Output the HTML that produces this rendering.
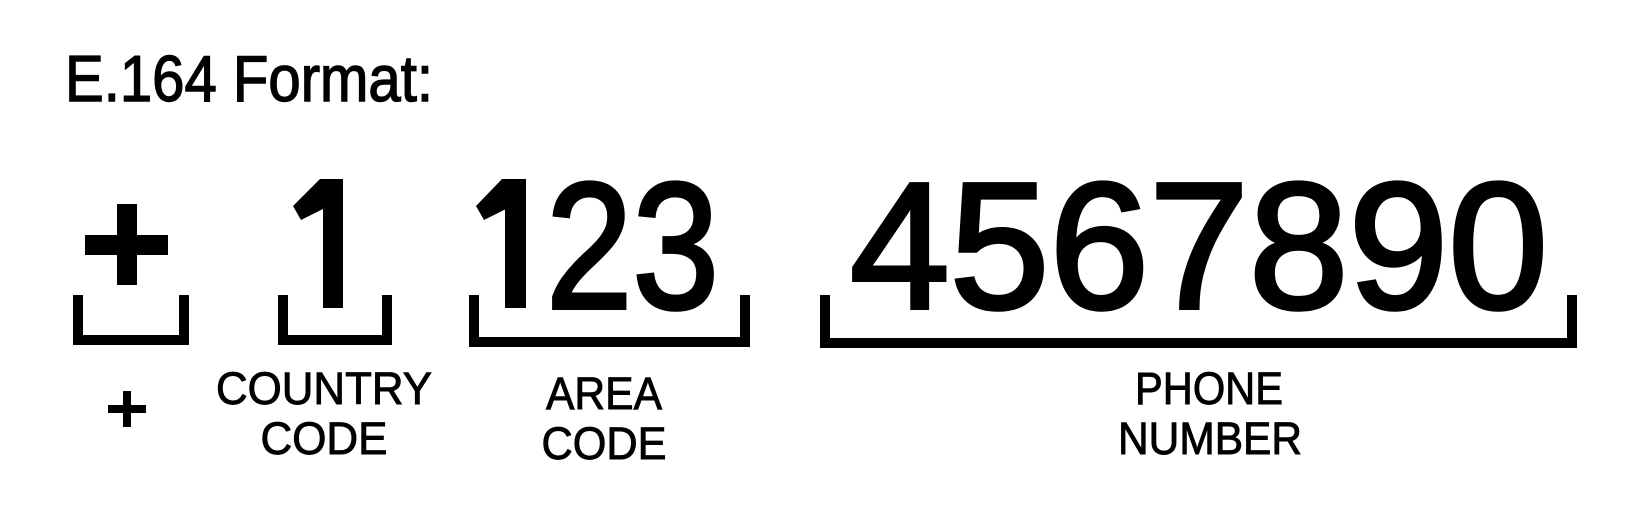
<!DOCTYPE html>
<html><head><meta charset="utf-8"><style>
html,body{margin:0;padding:0;background:#fff;}
svg{display:block;}
text{font-family:"Liberation Sans",sans-serif;fill:#000;}
</style></head><body>
<svg width="1633" height="505" viewBox="0 0 1633 505" xmlns="http://www.w3.org/2000/svg">
<text x="65" y="101" font-size="65" stroke="#000" stroke-width="1.4" textLength="368" lengthAdjust="spacingAndGlyphs">E.164 Format:</text>
<rect x="85" y="235" width="83" height="20"/>
<rect x="117" y="204" width="20" height="81"/>
<rect x="323" y="179" width="20" height="129"/>
<polygon points="320,179 343,179 343,199 301,220 293,206"/>
<rect x="505" y="179" width="21" height="129"/>
<polygon points="502,179 526,179 526,199 484,220 476,206"/>
<text x="546" y="308" font-size="180" stroke="#000" stroke-width="4" textLength="173" lengthAdjust="spacingAndGlyphs">23</text>
<text x="850" y="308" font-size="180" stroke="#000" stroke-width="4" textLength="698" lengthAdjust="spacingAndGlyphs">4567890</text>
<g fill="none" stroke="#000" stroke-width="10">
<path d="M78 295 V340 H184 V295"/>
<path d="M283 295 V340 H387 V295"/>
<path d="M474 295 V342 H745 V295"/>
<path d="M825 295 V343 H1572 V295"/>
</g>
<rect x="108" y="405" width="38" height="8"/>
<rect x="123" y="391" width="8" height="36"/>
<g font-size="45" text-anchor="middle" stroke="#000" stroke-width="0.9">
<text x="324" y="404" textLength="216" lengthAdjust="spacingAndGlyphs">COUNTRY</text>
<text x="324" y="454" textLength="127" lengthAdjust="spacingAndGlyphs">CODE</text>
<text x="604" y="409" textLength="116" lengthAdjust="spacingAndGlyphs">AREA</text>
<text x="604" y="459" textLength="125" lengthAdjust="spacingAndGlyphs">CODE</text>
<text x="1209" y="404" textLength="148" lengthAdjust="spacingAndGlyphs">PHONE</text>
<text x="1210" y="454" textLength="184" lengthAdjust="spacingAndGlyphs">NUMBER</text>
</g>
</svg>
</body></html>
